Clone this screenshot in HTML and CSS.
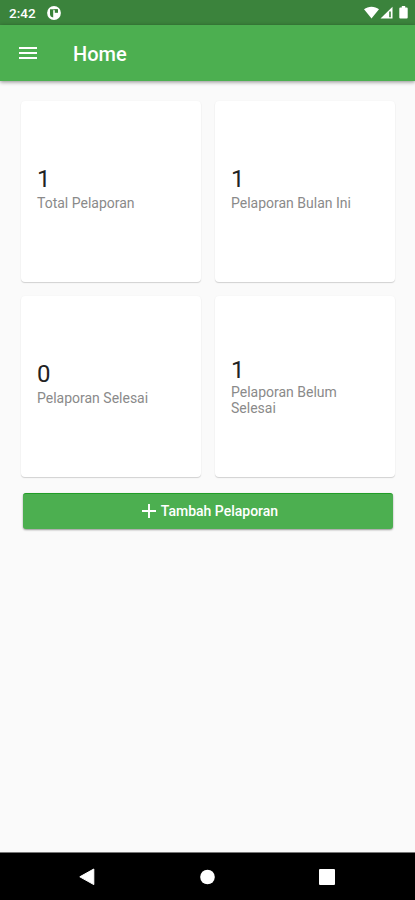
FILE: index.html
```html
<!DOCTYPE html>
<html lang="id">
<head>
<meta charset="utf-8">
<meta name="viewport" content="width=device-width">
<title>Home</title>
<link rel="stylesheet" href="styles.css">
</head>
<body>
<div class="status">
  <span class="time">2:42</span>
  <svg class="notice" width="14" height="14" viewBox="0 0 14 14"><circle cx="7" cy="7" r="6.9" fill="#fff"/><path d="M3 3.200h3.200v8.300Q3 11 3 8z" fill="#388238"/><path d="M7.800 3.400h3.200v3.400H7.800z" fill="#388238"/><path d="M6.200 3.200h4.600v1H6.200z" fill="#388238"/></svg>
  <svg class="signals" width="46" height="14" viewBox="0 0 46 14" fill="#fff"><path d="M0 3.200C4.200-.2 10.800-.2 15 3.200L7.500 12.500z"/><path d="M28.500.8v11.700H16.500z"/><path d="M25.200 5.500h1.600v5.800h-1.600z" fill="#388238"/><path d="M37.800 1.400V0h3.400v1.400h1.500q1 0 1 1v9.200q0 1-1 1h-6.400q-1 0-1-1V2.400q0-1 1-1z"/></svg>
</div>
<header class="appbar">
  <svg width="18" height="14" viewBox="0 0 18 14"><path d="M0 2h18M0 7h18M0 12h18" stroke="#fff" stroke-width="2"/></svg>
  <h1>Home</h1>
</header>
<main>
  <section class="grid">
    <article class="card"><strong>1</strong><p>Total Pelaporan</p></article>
    <article class="card"><strong>1</strong><p>Pelaporan Bulan Ini</p></article>
    <article class="card"><strong>0</strong><p>Pelaporan Selesai</p></article>
    <article class="card tall"><strong>1</strong><p>Pelaporan Belum Selesai</p></article>
  </section>
  <button class="add"><svg width="14" height="14" viewBox="0 0 14 14"><path d="M7 0v14M0 7h14" stroke="#fff" stroke-width="1.900"/></svg><span>Tambah Pelaporan</span></button>
</main>
<nav class="navbar">
  <svg width="16" height="18" viewBox="0 0 16 18"><path d="M14.800 1v15.600L.8 8.800z" fill="#fff" stroke="#fff" stroke-linejoin="round"/></svg>
  <svg width="16" height="16" viewBox="0 0 16 16"><circle cx="8.500" cy="8" r="7.300" fill="#fff"/></svg>
  <svg width="16" height="16" viewBox="0 0 16 16"><rect width="16" height="16" rx="1" fill="#fff"/></svg>
</nav>
</body>
</html>
```
FILE: styles.css
```css
* { box-sizing: border-box; }
body {
  margin: 0;
  height: 900px;
  display: flex;
  flex-direction: column;
  overflow: hidden;
  background: #fafafa;
  font-family: Roboto, sans-serif;
}
svg { display: block; flex: none; }
.status {
  height: 25px;
  display: flex;
  align-items: center;
  padding: 1px 5px 0 9px;
  background: #3b833c;
  color: #fff;
}
.time { width: 38px; font-size: 13.5px; font-weight: 500; }
.signals { margin-left: auto; }
.appbar {
  height: 56px;
  display: flex;
  align-items: center;
  gap: 35px;
  padding: 0 20px 0 19px;
  background: #4caf50;
  color: #fff;
  box-shadow: 0 1px 4px rgba(0, 0, 0, .45);
}
h1 { margin: 2px 0 0 1px; font-size: 20px; font-weight: 500; line-height: 24px; }
.appbar svg { margin-top: -1px; }
main { flex: 1; padding: 20px 20px 0 21px; }
.grid {
  display: grid;
  grid-template-columns: 180px 180px;
  grid-template-rows: 181px 181px;
  gap: 14px;
}
.card {
  display: flex;
  flex-direction: column;
  justify-content: center;
  padding: 0 16px 8px;
  background: #fff;
  border-radius: 4px;
  box-shadow: 0 1px 1px rgba(0, 0, 0, .16), 0 0 2px rgba(0, 0, 0, .04);
}
.card.tall { padding-bottom: 2px; }
.card strong { font-size: 24px; font-weight: 400; line-height: 28px; color: #222; }
.card p { margin: 2px 0 0; font-size: 14px; line-height: 16px; color: #8a8a8a; }
.card.tall p { margin-top: 0; }
.add {
  display: flex;
  align-items: center;
  justify-content: center;
  gap: 5px;
  width: 370px;
  height: 36px;
  margin: 16px 0 0 2px;
  padding: 0 0 2px 4px;
  border: 0;
  border-top: 1px solid #219d27;
  border-radius: 3px;
  background: #4caf50;
  box-shadow: 0 1px 2px rgba(0, 0, 0, .4);
  color: #fff;
  font: 500 14px/20px Roboto, sans-serif;
}
.navbar {
  height: 47px;
  display: flex;
  align-items: center;
  justify-content: space-between;
  padding: 0 80px 0 79px;
  background: #000;
  box-shadow: 0 -1px 0 #777;
}
```
